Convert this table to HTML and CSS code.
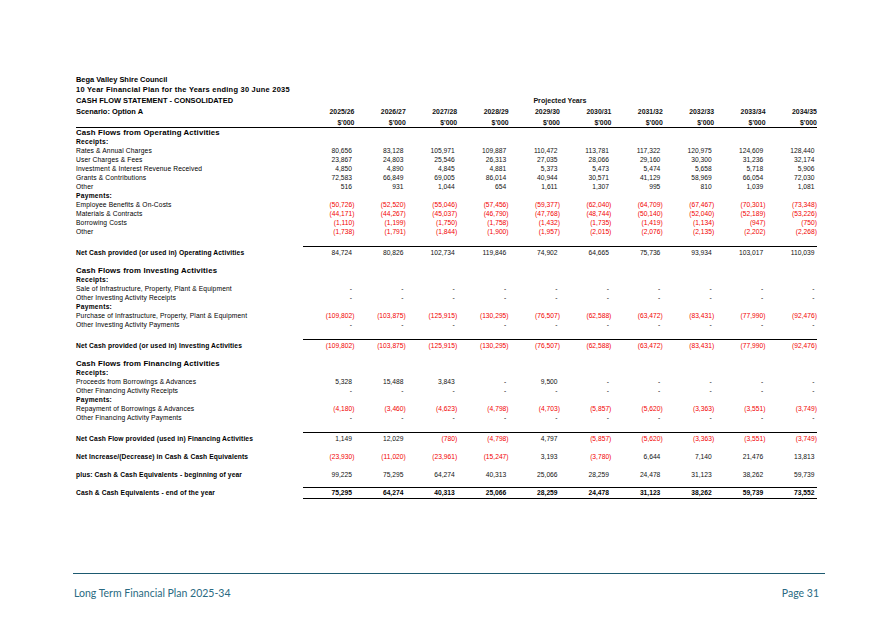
FILE: index.html
```html
<!DOCTYPE html>
<html lang="en">
<head>
<meta charset="utf-8">
<title>Cash Flow Statement - Consolidated</title>
<link rel="stylesheet" href="styles.css">
</head>
<body>
<div class="page">
  <div class="sheet">
    <div class="title">Bega Valley Shire Council</div>
    <div class="title wide">10 Year Financial Plan for the Years ending 30 June 2035</div>
    <div class="r hd"><div>CASH FLOW STATEMENT - CONSOLIDATED</div><div class="proj">Projected Years</div></div>
    <div class="r hd"><div>Scenario: Option A</div><div class="y">2025/26</div><div class="y">2026/27</div><div class="y">2027/28</div><div class="y">2028/29</div><div class="y">2029/30</div><div class="y">2030/31</div><div class="y">2031/32</div><div class="y">2032/33</div><div class="y">2033/34</div><div class="y">2034/35</div></div>
    <div class="r unit"><div></div><div class="y">$'000</div><div class="y">$'000</div><div class="y">$'000</div><div class="y">$'000</div><div class="y">$'000</div><div class="y">$'000</div><div class="y">$'000</div><div class="y">$'000</div><div class="y">$'000</div><div class="y">$'000</div></div>

    <div class="r sec"><div>Cash Flows from Operating Activities</div></div>
    <div class="r sub"><div>Receipts:</div></div>
    <div class="r"><div>Rates &amp; Annual Charges</div><div class="n">80,656</div><div class="n">83,128</div><div class="n">105,971</div><div class="n">109,887</div><div class="n">110,472</div><div class="n">113,781</div><div class="n">117,322</div><div class="n">120,975</div><div class="n">124,609</div><div class="n">128,440</div></div>
    <div class="r"><div>User Charges &amp; Fees</div><div class="n">23,867</div><div class="n">24,803</div><div class="n">25,546</div><div class="n">26,313</div><div class="n">27,035</div><div class="n">28,066</div><div class="n">29,160</div><div class="n">30,300</div><div class="n">31,236</div><div class="n">32,174</div></div>
    <div class="r"><div>Investment &amp; Interest Revenue Received</div><div class="n">4,850</div><div class="n">4,890</div><div class="n">4,845</div><div class="n">4,881</div><div class="n">5,373</div><div class="n">5,473</div><div class="n">5,474</div><div class="n">5,658</div><div class="n">5,718</div><div class="n">5,906</div></div>
    <div class="r"><div>Grants &amp; Contributions</div><div class="n">72,583</div><div class="n">66,849</div><div class="n">69,005</div><div class="n">86,014</div><div class="n">40,944</div><div class="n">30,571</div><div class="n">41,129</div><div class="n">58,969</div><div class="n">66,054</div><div class="n">72,030</div></div>
    <div class="r"><div>Other</div><div class="n">516</div><div class="n">931</div><div class="n">1,044</div><div class="n">654</div><div class="n">1,611</div><div class="n">1,307</div><div class="n">995</div><div class="n">810</div><div class="n">1,039</div><div class="n">1,081</div></div>
    <div class="r sub"><div>Payments:</div></div>
    <div class="r"><div>Employee Benefits &amp; On-Costs</div><div class="neg">(50,726)</div><div class="neg">(52,520)</div><div class="neg">(55,046)</div><div class="neg">(57,456)</div><div class="neg">(59,377)</div><div class="neg">(62,040)</div><div class="neg">(64,709)</div><div class="neg">(67,467)</div><div class="neg">(70,301)</div><div class="neg">(73,348)</div></div>
    <div class="r"><div>Materials &amp; Contracts</div><div class="neg">(44,171)</div><div class="neg">(44,267)</div><div class="neg">(45,037)</div><div class="neg">(46,790)</div><div class="neg">(47,768)</div><div class="neg">(48,744)</div><div class="neg">(50,140)</div><div class="neg">(52,040)</div><div class="neg">(52,189)</div><div class="neg">(53,226)</div></div>
    <div class="r"><div>Borrowing Costs</div><div class="neg">(1,110)</div><div class="neg">(1,199)</div><div class="neg">(1,750)</div><div class="neg">(1,758)</div><div class="neg">(1,432)</div><div class="neg">(1,735)</div><div class="neg">(1,419)</div><div class="neg">(1,134)</div><div class="neg">(947)</div><div class="neg">(750)</div></div>
    <div class="r"><div>Other</div><div class="neg">(1,738)</div><div class="neg">(1,791)</div><div class="neg">(1,844)</div><div class="neg">(1,900)</div><div class="neg">(1,957)</div><div class="neg">(2,015)</div><div class="neg">(2,076)</div><div class="neg">(2,135)</div><div class="neg">(2,202)</div><div class="neg">(2,268)</div></div>
    <div class="gap10"></div>
    <div class="r net"><div class="lbl">Net Cash provided (or used in) Operating Activities</div><div class="n">84,724</div><div class="n">80,826</div><div class="n">102,734</div><div class="n">119,846</div><div class="n">74,902</div><div class="n">64,665</div><div class="n">75,736</div><div class="n">93,934</div><div class="n">103,017</div><div class="n">110,039</div></div>
    <div class="gap9"></div>

    <div class="r sec"><div>Cash Flows from Investing Activities</div></div>
    <div class="r sub"><div>Receipts:</div></div>
    <div class="r"><div>Sale of Infrastructure, Property, Plant &amp; Equipment</div><div class="n">-</div><div class="n">-</div><div class="n">-</div><div class="n">-</div><div class="n">-</div><div class="n">-</div><div class="n">-</div><div class="n">-</div><div class="n">-</div><div class="n">-</div></div>
    <div class="r"><div>Other Investing Activity Receipts</div><div class="n">-</div><div class="n">-</div><div class="n">-</div><div class="n">-</div><div class="n">-</div><div class="n">-</div><div class="n">-</div><div class="n">-</div><div class="n">-</div><div class="n">-</div></div>
    <div class="r sub"><div>Payments:</div></div>
    <div class="r"><div>Purchase of Infrastructure, Property, Plant &amp; Equipment</div><div class="neg">(109,802)</div><div class="neg">(103,875)</div><div class="neg">(125,915)</div><div class="neg">(130,295)</div><div class="neg">(76,507)</div><div class="neg">(62,588)</div><div class="neg">(63,472)</div><div class="neg">(83,431)</div><div class="neg">(77,990)</div><div class="neg">(92,476)</div></div>
    <div class="r"><div>Other Investing Activity Payments</div><div class="n">-</div><div class="n">-</div><div class="n">-</div><div class="n">-</div><div class="n">-</div><div class="n">-</div><div class="n">-</div><div class="n">-</div><div class="n">-</div><div class="n">-</div></div>
    <div class="gap10"></div>
    <div class="r net"><div class="lbl">Net Cash provided (or used in) Investing Activities</div><div class="neg">(109,802)</div><div class="neg">(103,875)</div><div class="neg">(125,915)</div><div class="neg">(130,295)</div><div class="neg">(76,507)</div><div class="neg">(62,588)</div><div class="neg">(63,472)</div><div class="neg">(83,431)</div><div class="neg">(77,990)</div><div class="neg">(92,476)</div></div>
    <div class="gap9"></div>

    <div class="r sec"><div>Cash Flows from Financing Activities</div></div>
    <div class="r sub"><div>Receipts:</div></div>
    <div class="r"><div>Proceeds from Borrowings &amp; Advances</div><div class="n">5,328</div><div class="n">15,488</div><div class="n">3,843</div><div class="n">-</div><div class="n">9,500</div><div class="n">-</div><div class="n">-</div><div class="n">-</div><div class="n">-</div><div class="n">-</div></div>
    <div class="r"><div>Other Financing Activity Receipts</div><div class="n">-</div><div class="n">-</div><div class="n">-</div><div class="n">-</div><div class="n">-</div><div class="n">-</div><div class="n">-</div><div class="n">-</div><div class="n">-</div><div class="n">-</div></div>
    <div class="r sub"><div>Payments:</div></div>
    <div class="r"><div>Repayment of Borrowings &amp; Advances</div><div class="neg">(4,180)</div><div class="neg">(3,460)</div><div class="neg">(4,623)</div><div class="neg">(4,798)</div><div class="neg">(4,703)</div><div class="neg">(5,857)</div><div class="neg">(5,620)</div><div class="neg">(3,363)</div><div class="neg">(3,551)</div><div class="neg">(3,749)</div></div>
    <div class="r"><div>Other Financing Activity Payments</div><div class="n">-</div><div class="n">-</div><div class="n">-</div><div class="n">-</div><div class="n">-</div><div class="n">-</div><div class="n">-</div><div class="n">-</div><div class="n">-</div><div class="n">-</div></div>
    <div class="gap10"></div>
    <div class="r net"><div class="lbl">Net Cash Flow provided (used in) Financing Activities</div><div class="n">1,149</div><div class="n">12,029</div><div class="neg">(780)</div><div class="neg">(4,798)</div><div class="n">4,797</div><div class="neg">(5,857)</div><div class="neg">(5,620)</div><div class="neg">(3,363)</div><div class="neg">(3,551)</div><div class="neg">(3,749)</div></div>
    <div class="gap8"></div>

    <div class="r"><div class="lbl">Net Increase/(Decrease) in Cash &amp; Cash Equivalents</div><div class="neg">(23,930)</div><div class="neg">(11,020)</div><div class="neg">(23,961)</div><div class="neg">(15,247)</div><div class="n">3,193</div><div class="neg">(3,780)</div><div class="n">6,644</div><div class="n">7,140</div><div class="n">21,476</div><div class="n">13,813</div></div>
    <div class="gap9"></div>
    <div class="r"><div class="lbl">plus: Cash &amp; Cash Equivalents - beginning of year</div><div class="n">99,225</div><div class="n">75,295</div><div class="n">64,274</div><div class="n">40,313</div><div class="n">25,066</div><div class="n">28,259</div><div class="n">24,478</div><div class="n">31,123</div><div class="n">38,262</div><div class="n">59,739</div></div>
    <div class="gap8"></div>
    <div class="r tot"><div class="lbl">Cash &amp; Cash Equivalents - end of the year</div><div class="n">75,295</div><div class="n">64,274</div><div class="n">40,313</div><div class="n">25,066</div><div class="n">28,259</div><div class="n">24,478</div><div class="n">31,123</div><div class="n">38,262</div><div class="n">59,739</div><div class="n">73,552</div></div>
  </div>

  <footer class="foot">
    <span>Long Term Financial Plan 2025-34</span>
    <span>Page 31</span>
  </footer>
</div>
</body>
</html>
```

FILE: styles.css
```css
* { box-sizing: border-box; margin: 0; padding: 0; }
html, body { background: #fff; }
body {
  font-family: "Liberation Sans", Arial, sans-serif;
  color: #000;
}
.page {
  width: 876px;
  height: 620px;
  display: flex;
  flex-direction: column;
  padding-bottom: 20.5px;
  overflow: hidden;
}
.sheet {
  margin: 74.6px 0 0 76px;
  width: 741px;
}
.title {
  height: 10.75px;
  line-height: 10.75px;
  font-size: 7.45px;
  font-weight: bold;
  white-space: nowrap;
}
.title.wide { letter-spacing: 0.25px; }
.r {
  display: grid;
  grid-template-columns: 227px repeat(10, 51.4px);
  height: 9px;
  line-height: 9px;
  font-size: 6.7px;
  white-space: nowrap;
  color: #111;
}
.r > div:first-child {
  color: #000;
  letter-spacing: 0.12px;
}
.hd {
  height: 10.75px;
  line-height: 10.75px;
  font-size: 7.45px;
  font-weight: bold;
}
.hd > div:first-child { letter-spacing: 0; }
.hd .proj {
  grid-column: 2 / -1;
  text-align: center;
  font-size: 7.1px;
}
.y {
  text-align: right;
  font-size: 6.9px;
  font-weight: bold;
}
.unit {
  height: 10.75px;
  line-height: 9.25px;
  border-bottom: 1.5px solid #000;
}
.r.sec > div {
  font-size: 7.8px;
  font-weight: bold;
  letter-spacing: 0.15px;
}
.r.sub > div {
  font-weight: bold;
  letter-spacing: 0.25px;
}
.r > .lbl {
  font-weight: bold;
  letter-spacing: 0.15px;
}
.n, .neg { text-align: right; }
.n { padding-right: 2.4px; }
.neg { color: #f20000; }
.gap8 { height: 8.5px; }
.gap9 { height: 9px; }
.gap10 { height: 10px; }
.net { height: 11px; }
.net > div {
  border-top: 1px solid transparent;
  padding-top: 1px;
}
.net > .n, .net > .neg { border-top-color: #000; }
.tot { height: 11.5px; }
.tot > div {
  border-top: 1px solid transparent;
  border-bottom: 1.5px solid transparent;
}
.tot > .n {
  border-top-color: #000;
  border-bottom-color: #000;
  font-weight: bold;
  color: #000;
}
.foot {
  margin: auto 51px 0 73px;
  border-top: 1.5px solid #1d5a70;
  padding: 12.5px 6px 0 1px;
  display: flex;
  justify-content: space-between;
  font-family: Lato, "Open Sans", sans-serif;
  font-size: 10.5px;
  line-height: 13px;
  color: #2a6a82;
}
```
